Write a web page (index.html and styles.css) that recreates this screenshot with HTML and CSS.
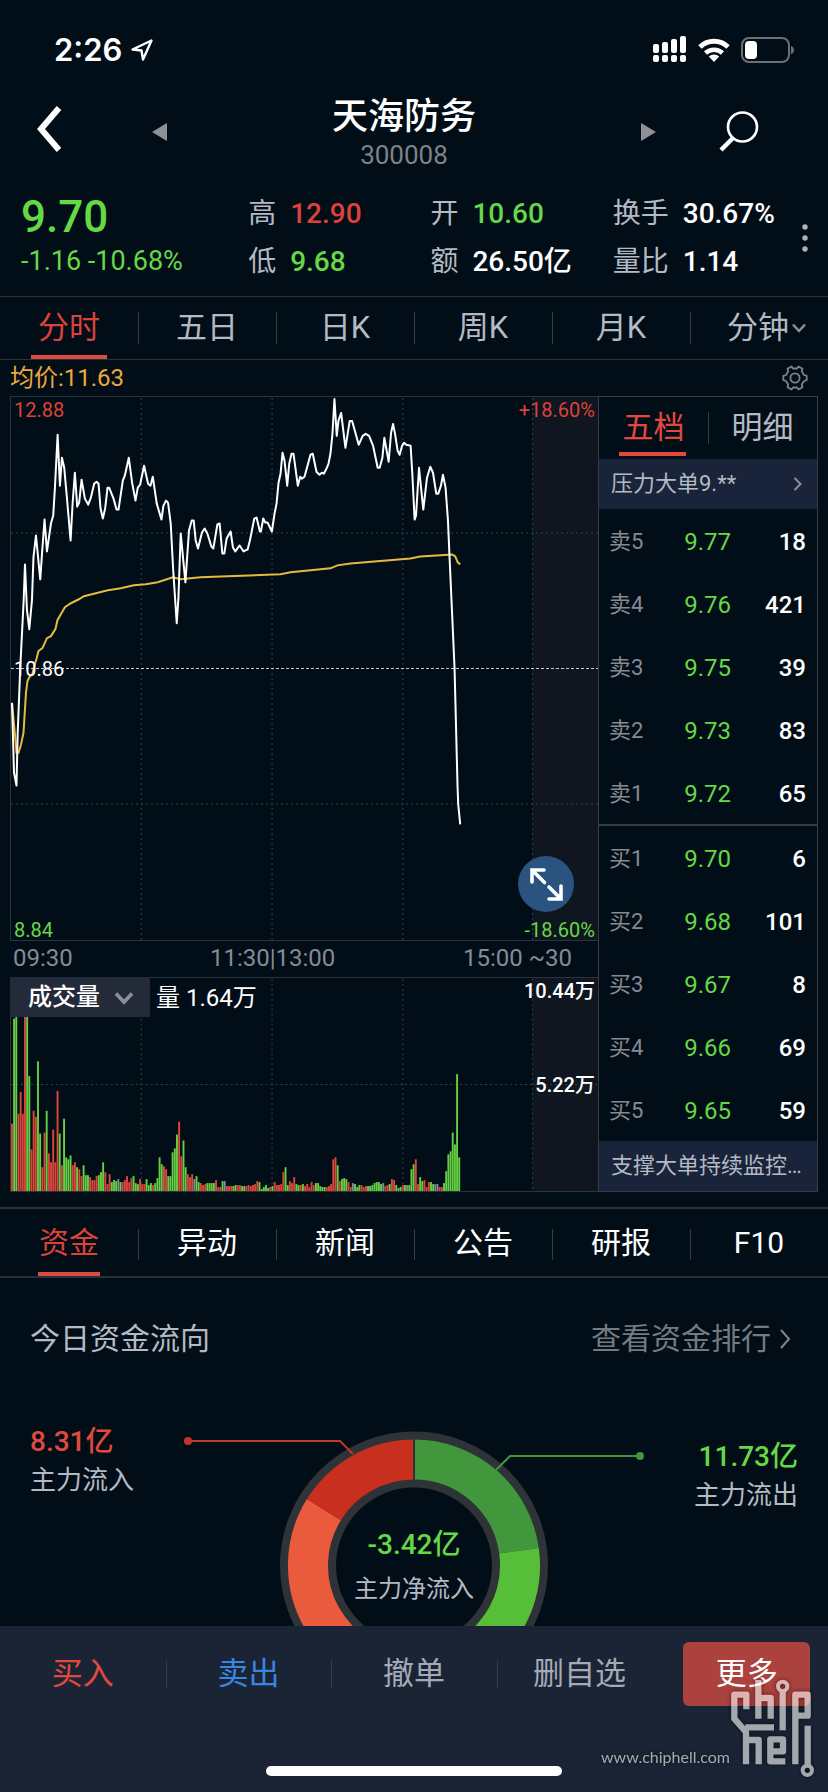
FILE: index.html
```html
<!DOCTYPE html>
<html lang="zh-CN">
<head>
<meta charset="utf-8">
<meta name="viewport" content="width=device-width, initial-scale=1">
<title>天海防务 300008</title>
<link rel="stylesheet" href="styles.css">
</head>
<body>

<div class="page">

  <div class="statusbar">
    <span class="clock">2:26</span>
    <svg class="loc" width="24" height="24" viewBox="0 0 24 24"><path d="M21.500 2.500 L2.500 11.500 L11.500 12.500 L13 21.500 Z" fill="none" stroke="#fff" stroke-width="2.400" stroke-linejoin="round"/></svg>
    <div class="sysicons">
      <svg width="34" height="28" viewBox="0 0 34 28" fill="#fff">
        <rect x="0" y="8" width="6" height="9" rx="2"/><rect x="9" y="6" width="6" height="11" rx="2"/><rect x="18" y="3" width="6" height="14" rx="2"/><rect x="27" y="0" width="6" height="17" rx="2"/>
        <rect x="0" y="19" width="6" height="7" rx="2"/><rect x="9" y="19" width="6" height="7" rx="2"/><rect x="18" y="19" width="6" height="7" rx="2"/><rect x="27" y="19" width="6" height="7" rx="2"/>
      </svg>
      <svg width="32" height="24" viewBox="0 0 32 24">
        <path d="M2 9 A20 20 0 0 1 30 9" fill="none" stroke="#fff" stroke-width="5"/>
        <path d="M7.500 15 A12.500 12.500 0 0 1 24.500 15" fill="none" stroke="#fff" stroke-width="4.500"/>
        <path d="M16 24 L10.800 18.500 A7.500 7.500 0 0 1 21.200 18.500 Z" fill="#fff"/>
      </svg>
      <svg width="54" height="26" viewBox="0 0 54 26">
        <rect x="1" y="1" width="47" height="24" rx="7" fill="none" stroke="#6b7077" stroke-width="2"/>
        <rect x="4" y="4" width="12" height="18" rx="4" fill="#fff"/>
        <path d="M50 9 Q53 10 53 13 Q53 16 50 17 Z" fill="#6b7077"/>
      </svg>
    </div>
  </div>

  <header class="titlebar">
    <button class="iconbtn" aria-label="返回"><svg width="28" height="54" viewBox="0 0 28 54"><path d="M23 3 L5 24 L23 45" fill="none" stroke="#fff" stroke-width="6"/></svg></button>
    <div class="stocknav">
      <button class="iconbtn" aria-label="上一只"><svg width="15" height="18" viewBox="0 0 15 18"><path d="M15 0 V18 L0 9 Z" fill="#8e9297"/></svg></button>
      <div class="stockname">
        <h1>天海防务</h1>
        <p>300008</p>
      </div>
      <button class="iconbtn" aria-label="下一只"><svg width="15" height="18" viewBox="0 0 15 18"><path d="M0 0 V18 L15 9 Z" fill="#8e9297"/></svg></button>
    </div>
    <button class="iconbtn" aria-label="搜索"><svg width="42" height="42" viewBox="0 0 42 42"><circle cx="24.500" cy="16" r="14.500" fill="none" stroke="#fff" stroke-width="2.600"/><path d="M15 27 L3 39" stroke="#fff" stroke-width="4.500"/></svg></button>
  </header>

  <section class="quote">
    <div class="last">
      <strong>9.70</strong>
      <span>-1.16 -10.68%</span>
    </div>
    <dl><dt>高</dt><dd class="up">12.90</dd><dt>低</dt><dd class="down">9.68</dd></dl>
    <dl><dt>开</dt><dd class="down">10.60</dd><dt>额</dt><dd>26.50亿</dd></dl>
    <dl><dt>换手</dt><dd>30.67%</dd><dt>量比</dt><dd>1.14</dd></dl>
    <button class="iconbtn more-dots" aria-label="更多行情"><svg width="6" height="30" viewBox="0 0 6 30" fill="#aeb3b9"><circle cx="3" cy="4" r="2.700"/><circle cx="3" cy="15" r="2.700"/><circle cx="3" cy="26" r="2.700"/></svg></button>
  </section>

  <nav class="tabs periods">
    <button class="selected">分时</button>
    <button>五日</button>
    <button>日K</button>
    <button>周K</button>
    <button>月K</button>
    <button class="minutes">分钟<svg width="16" height="12" viewBox="0 0 16 12"><path d="M2 2.500 L8 9 L14 2.500" fill="none" stroke="#8b9097" stroke-width="2.500"/></svg></button>
  </nav>

  <div class="avgline">
    <span>均价:11.63</span>
    <button class="iconbtn" aria-label="设置"><svg width="26" height="26" viewBox="0 0 26 26" fill="none" stroke="#7d838b" stroke-width="1.800" stroke-linejoin="round"><path d="M9.500 1.500 L11 3.500 H15 L16.500 1.500 L20.500 3.800 L19.800 6.500 L22 10 L24.700 10.800 V15.200 L22 16 L19.800 19.500 L20.500 22.200 L16.500 24.500 L15 22.500 H11 L9.500 24.500 L5.500 22.200 L6.200 19.500 L4 16 L1.300 15.200 V10.800 L4 10 L6.200 6.500 L5.500 3.800 Z"/><circle cx="13" cy="13" r="4.600"/></svg></button>
  </div>

  <main class="board">
    <div class="charts">

      <div class="pricechart">
        <svg viewBox="10 396 588 545" preserveAspectRatio="none">
          <rect class="after" x="532.500" y="396" width="66" height="545"/>
          <path class="gridline" d="M140.500 397V941 M271.500 397V941 M402.500 397V941 M532.500 397V941 M10 532.500H598 M10 804.500H598"/>
          <path class="midline" d="M10 668.500H598"/>
          <polyline class="avg" points="11,703 14,735 15.500,753 17.500,753 20,745 22.500,733 25,693 26.500,681 28.500,677 31.500,674 33,667 35.500,659 37.500,651 41.500,648 46,638 50,636 54.500,629 56.500,620 60.500,613 64,607 70,603 78,599 83,596 95,593 107,590 120,588 133,585 145,584 157,582 172,577 180,579 200,577 227,576 280,574 290,572 330,568 337,565 350,563 410,558 420,556 452,554 455,556 457.500,562 460,564"/>
          <polyline class="price" points="11,703 13,773 15.500,786 16.700,733 19.300,667 22.700,600 24,564 26,610 28.300,629 31,600 32.500,557 35,535 39.300,579 41.300,550 43.600,519 46,551 50,523 52.300,515 54,487 56.700,434 59,485 61,457 63.300,467 66,497 69.700,540 71.700,503 74,472 76.300,506 78.300,502 80.700,479 84,498 87.300,504 90,497 93.300,483 95.700,481 97.700,483 99.700,508 102,518 104.300,508 106.700,487 108.300,487 112.700,498 115.700,509 117.700,509 122,480 124,475 128,457 131.300,482 134.700,500 137,487 139.300,484 143.300,465 147.300,483 149.700,485 152,476 156,503 160.700,519 162.700,505 165.300,500 167.300,502 170,523 172.300,567 176,623 177.700,598 180,533 184.700,582 188.300,530 191,520 193,520 195,540 197.300,548 201.300,532 204,528 206.700,533 210.700,546 212.700,548 216.700,524 219,523 221.700,553 223.700,553 226,538 230,531 232.300,547 234.700,551 239,545 243,551 247,549 249.300,540 253.700,518 256,517 259.300,531 260.300,531 262.700,518 264.700,522 267,522 271.300,531 274,513 276,503 278,482 280,473 282,452 284,460 286.700,485 288.700,463 291,453 293,453 297.300,485 299.700,476 301.300,478 304,476 310,454 312.300,453 316,471 319,474 321.300,472 323.300,473 326,468 328,463 330,453 332,433 334,398 336.300,435 338,420 340.700,412 345,447 349.300,420 351.700,420 358.300,444 362.300,435 365.300,433 368.700,435 372.700,445 377.300,467 379.300,467 382,457 384,437 388.300,461 390.700,432 392.700,423 394.700,433 397.300,450 399.300,454 401.700,445 403.700,442 406,444 410.300,445 412,473 414.300,519 415.700,515 418.700,467 423,509 426.700,477 430,466 432.700,472 436,493 438,493 440.700,485 442.700,474 445.300,487 447.700,520 449.300,557 451.700,610 454.300,668 457.300,787 458,805 460,825"/>
        </svg>
        <span class="lbl top left up">12.88</span>
        <span class="lbl top right up">+18.60%</span>
        <span class="lbl middle left">10.86</span>
        <span class="lbl bottom left down">8.84</span>
        <span class="lbl bottom right down">-18.60%</span>
        <button class="expand" aria-label="全屏"><svg width="34" height="34" viewBox="0 0 34 34" fill="none" stroke="#fff" stroke-width="3.600" stroke-linecap="round"><path d="M3 15 V3 H15 M4 4 L15.500 15.500 M20 20 L31 31 M32 19 V32 H20"/></svg></button>
      </div>

      <div class="times">
        <span>09:30</span>
        <span>11:30|13:00</span>
        <span>15:00 ~30</span>
      </div>

      <div class="volchart">
        <svg viewBox="10 977 588 215" preserveAspectRatio="none">
          <rect class="after" x="532.500" y="977" width="66" height="215"/>
          <path class="gridline" d="M140.500 978V1192 M271.500 978V1192 M402.500 978V1192 M532.500 978V1192 M10 1084.500H598"/>
          <g id="volbars"></g>
        </svg>
        <div class="volhead">
          <div class="indicator">
            <select aria-label="指标"><option>成交量</option></select>
            <svg width="20" height="14" viewBox="0 0 20 14"><path d="M2 2.500 L10 11 L18 2.500" fill="none" stroke="#8b9097" stroke-width="3.600"/></svg>
          </div>
          <span>量 1.64万</span>
        </div>
        <span class="lbl top right">10.44万</span>
        <span class="lbl middle right">5.22万</span>
      </div>
    </div>

    <aside class="book">
      <div class="booktabs">
        <button class="selected">五档</button>
        <button>明细</button>
      </div>
      <a class="bigorder" href="#pressure">压力大单9.**<svg width="10" height="16" viewBox="0 0 10 16"><path d="M1.500 2 L7.500 8 L1.500 14" fill="none" stroke="#8b9097" stroke-width="2"/></svg></a>
      <table>
        <tbody>
          <tr><th scope="row">卖5</th><td>9.77</td><td>18</td></tr>
          <tr><th scope="row">卖4</th><td>9.76</td><td>421</td></tr>
          <tr><th scope="row">卖3</th><td>9.75</td><td>39</td></tr>
          <tr><th scope="row">卖2</th><td>9.73</td><td>83</td></tr>
          <tr><th scope="row">卖1</th><td>9.72</td><td>65</td></tr>
        </tbody>
        <tbody class="bids">
          <tr><th scope="row">买1</th><td>9.70</td><td>6</td></tr>
          <tr><th scope="row">买2</th><td>9.68</td><td>101</td></tr>
          <tr><th scope="row">买3</th><td>9.67</td><td>8</td></tr>
          <tr><th scope="row">买4</th><td>9.66</td><td>69</td></tr>
          <tr><th scope="row">买5</th><td>9.65</td><td>59</td></tr>
        </tbody>
      </table>
      <a class="bigorder" href="#support">支撑大单持续监控…</a>
    </aside>
  </main>

  <nav class="tabs info">
    <button class="selected">资金</button>
    <button>异动</button>
    <button>新闻</button>
    <button>公告</button>
    <button>研报</button>
    <button>F10</button>
  </nav>

  <section class="funds">
    <div class="fundshead">
      <h2>今日资金流向</h2>
      <a href="#rank">查看资金排行<svg width="12" height="22" viewBox="0 0 12 22"><path d="M2 2 L10 11 L2 20" fill="none" stroke="#80858c" stroke-width="2"/></svg></a>
    </div>
    <div class="flow">
      <div class="legend in"><strong>8.31亿</strong><span>主力流入</span></div>
      <div class="donut">
        <svg width="468" height="290" viewBox="180 1423 468 290" fill="none">
          <circle cx="414" cy="1565.500" r="106" stroke="#2e3338" stroke-width="56"/>
          <g stroke-width="40">
            <path stroke="#42973c" d="M414 1459.500 A106 106 0 0 1 519 1550.700"/>
            <path stroke="#57be39" d="M519 1550.700 A106 106 0 0 1 414 1671.500"/>
            <path stroke="#ea5b3d" d="M414 1671.500 A106 106 0 0 1 323.900 1509.600"/>
            <path stroke="#c82f1f" d="M323.900 1509.600 A106 106 0 0 1 414 1459.500"/>
          </g>
          <path d="M414 1439V1480" stroke="#2e3338" stroke-width="2"/>
          <path d="M188 1441H340L353 1454" stroke="#c43629" stroke-width="2"/>
          <circle cx="188" cy="1441" r="4" fill="#c43629"/>
          <path d="M640 1456H510L496 1470" stroke="#42973c" stroke-width="2"/>
          <circle cx="640" cy="1456" r="4" fill="#42973c"/>
        </svg>
        <div class="net"><strong>-3.42亿</strong><span>主力净流入</span></div>
      </div>
      <div class="legend out"><strong>11.73亿</strong><span>主力流出</span></div>
    </div>
  </section>

  <footer class="trade">
    <div class="tradebar">
      <button class="buy">买入</button>
      <button class="sell">卖出</button>
      <button>撤单</button>
      <button>删自选</button>
      <button class="more">更多</button>
    </div>
    <div class="homebar"></div>
    <div class="watermark">
      <span>www.chiphell.com</span>
      <svg width="86" height="100" viewBox="420 172 258 300" fill="none" stroke="#fff" stroke-width="19" stroke-linejoin="round">
        <path d="M469 266 V222 H433 V294 L468 334 V431 M466 320 H552 M468 358 H506 V431"/>
        <path d="M505 178 V294 M505 232 H542 V294"/>
        <path d="M578 211 V329"/>
        <path d="M616 431 V222 H653 V285 H622"/>
        <path d="M586 422 H541 V356 H579 V392 H550"/>
        <path d="M653 315 V434"/>
        <circle cx="578" cy="197" r="14" stroke-width="12"/>
        <circle cx="652" cy="449" r="14" stroke-width="12"/>
      </svg>
    </div>
  </footer>

</div>

<script src="volume.js"></script>
</body>
</html>
```
FILE: styles.css
```css
* { box-sizing: border-box; }
body { margin: 0; background: #020e17; color: #fff; font-family: Roboto, "Noto Sans CJK SC", sans-serif; line-height: 1.2; }
h1, h2, p, dl, dd { margin: 0; font-weight: 400; }
button { border: 0; padding: 0; margin: 0; background: none; color: inherit; font: inherit; cursor: pointer; }
a { color: inherit; text-decoration: none; }
svg { display: block; }
strong { font-weight: 500; }

.page { display: flex; flex-direction: column; height: 100vh; overflow: hidden; }
.up { color: #dd4139; }
.down { color: #65d847; }
.iconbtn { flex: none; }

/* top of the screen */
.statusbar { display: flex; align-items: center; flex: none; height: 94px; padding: 6px 33px 0 54px; }
.clock { font: 600 31px/40px Inter, sans-serif; }
.loc { margin-left: 8px; }
.sysicons { display: flex; align-items: center; gap: 11px; margin-left: auto; }

.titlebar { display: flex; align-items: center; flex: none; height: 76px; padding: 0 68px 0 36px; }
.stocknav { display: flex; flex: 1; align-items: center; justify-content: space-between; margin: 0 62px 0 88px; }
.stockname { text-align: center; }
.stockname h1 { font-size: 36px; line-height: 46px; font-weight: 500; }
.stockname p { font-size: 26px; line-height: 30px; color: #7c828a; }

.quote { display: grid; grid-template-columns: 228fr 183fr 183fr 190fr 6px; flex: none; padding: 20px 20px 12px 21px; }
.last { display: flex; flex-direction: column; color: #65d847; }
.last strong { font-size: 44px; line-height: 54px; }
.last span { font-size: 27px; line-height: 34px; }
.quote dl { display: grid; grid-template-columns: auto 1fr; column-gap: 14px; font-size: 28px; line-height: 48px; white-space: nowrap; }
.quote dt { color: #b4bac4; }
.quote dd { font-weight: 500; }
.more-dots { align-self: center; }

/* both tab rows */
.tabs { display: grid; grid-template-columns: repeat(6, 1fr); flex: none; border-top: 1px solid #27313a; border-bottom: 1px solid #27313a; }
.tabs button { position: relative; height: 62px; font-size: 31px; line-height: 62px; color: #b4bac4; white-space: nowrap; }
.tabs button + button::before { content: ""; position: absolute; left: 0; top: 15px; width: 1px; height: 32px; background: #333d46; }
.tabs .selected::after { content: ""; position: absolute; left: 31px; right: 31px; bottom: 0; height: 4px; background: #dc4b41; }
.tabs button.selected { color: #dd4139; }
.periods { margin-top: -2px; }
.minutes { display: flex; align-items: center; justify-content: center; gap: 2px; padding-left: 16px; }
.info { margin-top: 15px; border-width: 2px; }
.info button { height: 67px; font-size: 30px; line-height: 68px; color: #fff; }
.info button + button::before { top: 20px; height: 31px; }
.info .selected::after { left: 38px; right: 38px; }

.avgline { display: flex; align-items: center; justify-content: space-between; flex: none; height: 36px; padding: 0 20px 0 10px; font-size: 24px; color: #eba83c; }

/* charts and order book */
.board { display: grid; grid-template-columns: minmax(0, 1fr) 220px; flex: none; padding: 0 10px; }
.pricechart, .volchart { position: relative; border: 1px solid #2b343d; border-right: 0; }
.pricechart { height: 545px; }
.volchart { height: 215px; }
.pricechart > svg, .volchart > svg { width: 100%; height: 100%; }
.pricechart path, .pricechart polyline { vector-effect: non-scaling-stroke; }
.after { fill: #0f161f; }
.gridline { fill: none; stroke: #35424b; stroke-dasharray: 2 3; }
.midline { stroke: #c9ced2; stroke-dasharray: 3 2; }
.price { fill: none; stroke: #fff; stroke-width: 2; stroke-linejoin: round; }
.avg { fill: none; stroke: #e6b93f; stroke-width: 2; }

.lbl { position: absolute; font-size: 20px; line-height: 24px; }
.lbl.left { left: 3px; }
.lbl.right { right: 3px; }
.lbl.top { top: 1px; }
.lbl.middle { top: 50%; margin-top: -12px; }
.lbl.bottom { bottom: -2px; }
.volchart .lbl { font-weight: 500; }
.expand { position: absolute; right: 24px; bottom: 28px; display: grid; place-items: center; width: 56px; height: 56px; border-radius: 50%; background: #2b5380; }

.times { display: grid; grid-template-columns: 198fr 123fr 238fr; height: 36px; padding: 0 26px 0 3px; font-size: 24px; line-height: 34px; color: #858b93; white-space: nowrap; }
.times span:last-child { text-align: right; }
.volhead { position: absolute; left: 0; top: 0; display: flex; gap: 6px; font-size: 24px; line-height: 41px; }
.indicator { position: relative; margin: -1px 0 0 -1px; }
.indicator select { width: 140px; height: 40px; border: 0; border-radius: 0; padding: 0 0 0 18px; background: #232a39; color: #fff; font: inherit; font-weight: 500; line-height: 36px; appearance: none; }
.indicator svg { position: absolute; right: 16px; top: 14px; pointer-events: none; }

.book { display: flex; flex-direction: column; border: 1px solid #353e47; }
.booktabs { display: grid; grid-template-columns: 1fr 1fr; height: 62px; }
.booktabs button { position: relative; font-size: 31px; line-height: 60px; color: #b4bac4; }
.booktabs button + button::before { content: ""; position: absolute; left: 0; top: 15px; width: 1px; height: 32px; background: #333d46; }
.booktabs button.selected { color: #e2493d; }
.booktabs .selected::after { content: ""; position: absolute; left: 20px; right: 22px; bottom: 3px; height: 4px; background: #e2493d; }
.bigorder { display: flex; align-items: center; justify-content: space-between; height: 50px; padding: 0 14px 0 12px; background: #19243a; font-size: 22px; color: #b4bac4; white-space: nowrap; }
.book table { width: 100%; border-spacing: 0; font-size: 24px; }
.book th, .book td { height: 63px; padding: 2px 0 0; line-height: 30px; }
.book th { padding-left: 10px; text-align: left; font-size: 22px; font-weight: 400; color: #858b93; }
.book td { font-weight: 500; text-align: right; }
.book td:nth-child(2) { color: #65d847; font-weight: 400; }
.book td:last-child { width: 86px; padding-right: 11px; }
.bids tr:first-child > * { height: 65px; border-top: 2px solid #353e47; }

/* fund flow */
.funds { flex: 1; min-height: 0; overflow: hidden; padding: 41px 30px 0; }
.fundshead { display: flex; justify-content: space-between; margin-bottom: 64px; padding-right: 7px; font-size: 30px; line-height: 40px; }
.fundshead h2 { font-size: 30px; line-height: 40px; color: #b4bac4; }
.fundshead a { display: flex; align-items: center; gap: 8px; color: #747a82; }
.flow { display: flex; justify-content: space-between; }
.legend { display: flex; flex-direction: column; width: 150px; font-size: 26px; line-height: 38px; color: #b4bac4; }
.legend strong { font-size: 28px; }
.in strong { color: #e2493d; }
.out { padding-top: 15px; text-align: right; }
.out strong, .net strong { color: #65d847; }
.donut { position: relative; }
.net { position: absolute; left: 0; right: 0; top: 100px; display: flex; flex-direction: column; text-align: center; font-size: 24px; line-height: 44px; color: #b4bac4; }
.net strong { font-size: 28px; }

/* bottom bar */
.trade { position: relative; flex: none; height: 166px; padding-top: 16px; background: #1a2435; }
.tradebar { display: grid; grid-template-columns: repeat(5, 1fr); }
.tradebar button { position: relative; height: 64px; font-size: 31px; line-height: 64px; color: #a4aab5; }
.tradebar button + button:not(.more)::before { content: ""; position: absolute; left: 0; top: 18px; width: 1px; height: 28px; background: #333d4c; }
.tradebar .buy { color: #e2493d; }
.tradebar .sell { color: #3b84e0; }
.tradebar .more { margin: 0 18px 0 21px; border-radius: 6px; background: #ab423d; color: #fff; }
.homebar { width: 296px; height: 10px; margin: 60px auto 0; border-radius: 5px; background: #fff; }
.watermark { position: absolute; right: 12px; bottom: 14px; display: flex; align-items: flex-end; pointer-events: none; opacity: 0.6; filter: drop-shadow(0 0 2px #000); }
.watermark span { font: 16px/42px Lato, sans-serif; }
```
FILE: volume.js
```js
// one entry per minute from 09:30: colour (r up, g down, n flat) and bar height
var volumes = "r68 g174 g200 r78 r100 r78 r200 g200 g116 r42 r81 r75 g131 g58 r24 r59 g81 r38 r29 r62 " +
  "r29 r101 g58 r26 g73 g34 g32 g36 r26 r29 g24 r22 r15 g26 g16 g16 r14 r11 r11 r15 " +
  "g16 g19 g29 r19 r7 r17 g9 g11 g10 n12 g9 r9 r11 r15 r9 r13 g15 g8 g7 r12 " +
  "r7 r7 g12 g6 g8 r6 g8 g13 g34 g27 r25 r22 g15 g15 g39 g43 g57 r70 r35 g51 " +
  "g24 r17 r14 r17 n12 g15 g9 r8 r6 r7 g8 g8 g8 g8 r11 r4 r4 g10 n10 r5 " +
  "r5 r5 g5 g6 r6 r6 g5 g5 r5 r6 r5 r6 r7 r10 g9 g2 g4 g6 g3 r4 " +
  "g5 r9 r6 r6 r7 r19 g24 g6 r10 r8 r14 g7 g6 r6 g7 r5 r7 r4 r9 r6 " +
  "g8 g8 g5 g4 g4 r4 r5 r7 r32 r34 g26 r10 g12 g13 g12 r9 r4 n8 g7 g4 " +
  "g6 r6 r4 r5 g5 g5 g6 g8 g9 g9 g7 n8 r5 r6 g7 r12 r11 g6 g3 g4 " +
  "r6 g6 n6 g6 g22 g27 r32 r7 g14 g10 r11 r4 r9 g9 g7 n7 n7 r4 r4 g8 " +
  "g20 g37 g40 g59 g47 g118 g34";

var fills = { r: "#dc473d", g: "#65d044", n: "#7d8c98" };
var bars = document.getElementById("volbars");

volumes.split(" ").forEach(function(v, i) {
  var h = Number(v.slice(1));
  var rect = document.createElementNS("http://www.w3.org/2000/svg", "rect");
  rect.setAttribute("x", 10 + i * 2.175);
  rect.setAttribute("y", 1192 - h);
  rect.setAttribute("width", 1.9);
  rect.setAttribute("height", h);
  rect.setAttribute("fill", fills[v.charAt(0)]);
  bars.appendChild(rect);
});
```
